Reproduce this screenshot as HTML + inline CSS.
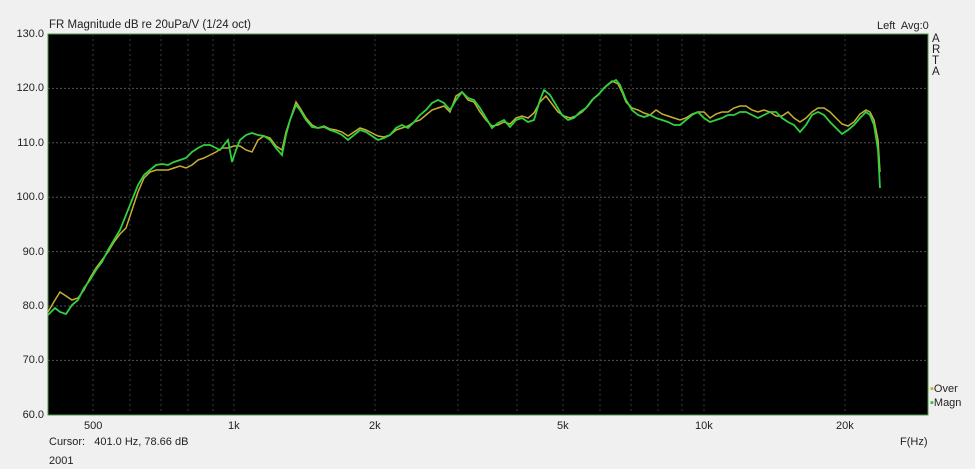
<!DOCTYPE html>
<html><head><style>
body{margin:0;width:975px;height:469px;background:#f0f0f0;font-family:"Liberation Sans",sans-serif;font-size:11px;color:#222;overflow:hidden;position:relative}
.t{position:absolute;white-space:nowrap}
.yl{position:absolute;right:931px;text-align:right}
</style></head><body>
<div class="t" style="left:49px;top:19px;font-size:11.5px">FR Magnitude dB re 20uPa/V (1/24 oct)</div>
<div class="t" style="left:877px;top:20px">Left&nbsp; Avg:0</div>
<div class="t" style="left:932px;top:34px;line-height:11px;font-size:11.5px">A<br>R<br>T<br>A</div>
<div class="yl" style="top:28px">130.0</div>
<div class="yl" style="top:82px">120.0</div>
<div class="yl" style="top:137px">110.0</div>
<div class="yl" style="top:191px">100.0</div>
<div class="yl" style="top:246px">90.0</div>
<div class="yl" style="top:300px">80.0</div>
<div class="yl" style="top:354px">70.0</div>
<div class="yl" style="top:409px">60.0</div>
<div class="t" style="left:84px;top:420px">500</div>
<div class="t" style="left:228px;top:420px">1k</div>
<div class="t" style="left:369px;top:420px">2k</div>
<div class="t" style="left:557px;top:420px">5k</div>
<div class="t" style="left:695px;top:420px">10k</div>
<div class="t" style="left:836px;top:420px">20k</div>
<div class="t" style="left:900px;top:436px">F(Hz)</div>
<div class="t" style="left:49px;top:436px">Cursor:&nbsp;&nbsp; 401.0 Hz, 78.66 dB</div>
<div class="t" style="left:49px;top:455px">2001</div>
<div class="t" style="left:930px;top:383px"><span style="color:#c8b030">▪</span>Over</div>
<div class="t" style="left:930px;top:397px"><span style="color:#30c040">▪</span>Magn</div>
<svg width="975" height="469" style="position:absolute;left:0;top:0">
<rect x="48" y="34" width="880" height="381" fill="#000" stroke="#4c9a4c" stroke-width="1"/>
<g stroke="#555" stroke-width="1" stroke-dasharray="2,2">
<line x1="48" x2="928" y1="88.4" y2="88.4"/><line x1="48" x2="928" y1="142.8" y2="142.8"/><line x1="48" x2="928" y1="197.2" y2="197.2"/><line x1="48" x2="928" y1="251.6" y2="251.6"/><line x1="48" x2="928" y1="306" y2="306"/><line x1="48" x2="928" y1="360.4" y2="360.4"/>
</g>
<g stroke="#3a3a3a" stroke-width="1" stroke-dasharray="2,3">
<line x1="93" x2="93" y1="34" y2="415"/><line x1="130" x2="130" y1="34" y2="415"/><line x1="161" x2="161" y1="34" y2="415"/><line x1="188" x2="188" y1="34" y2="415"/><line x1="213" x2="213" y1="34" y2="415"/><line x1="234" x2="234" y1="34" y2="415"/><line x1="375" x2="375" y1="34" y2="415"/><line x1="458" x2="458" y1="34" y2="415"/><line x1="517" x2="517" y1="34" y2="415"/><line x1="563" x2="563" y1="34" y2="415"/><line x1="600" x2="600" y1="34" y2="415"/><line x1="631" x2="631" y1="34" y2="415"/><line x1="658" x2="658" y1="34" y2="415"/><line x1="682" x2="682" y1="34" y2="415"/><line x1="704" x2="704" y1="34" y2="415"/><line x1="845" x2="845" y1="34" y2="415"/>
</g>
<polyline fill="none" stroke="#c8b030" stroke-width="1.5" points="48,312 55,300 60,292 66,296 72,300 78,298 84,290 90,278 96,268 102,260 108,252 114,242 120,234 126,228 132,210 138,192 144,178 150,172 156,170 162,170 168,170 174,168 180,166 186,168 192,165 198,160 204,158 210,155 216,152 222,148 228,148 234,146 240,146 246,150 252,152 258,140 264,136 270,138 276,146 282,150 286,132 290,120 296,102 300,108 306,118 312,125 318,128 324,126 330,129 336,130 342,132 348,136 354,132 360,128 366,130 372,133 378,136 384,137 390,135 396,130 402,128 408,126 414,122 420,120 426,115 432,110 438,108 444,106 450,112 456,96 462,92 468,100 474,102 480,112 486,120 492,126 498,125 504,122 510,124 516,118 522,116 528,118 534,113 540,102 546,96 552,104 558,112 564,116 570,118 576,116 582,112 588,106 594,98 600,93 606,86 612,81 618,84 622,92 626,102 632,108 638,110 644,113 650,115 656,110 662,114 668,116 674,118 680,120 686,118 692,114 698,112 704,112 710,118 716,114 722,112 728,112 734,108 740,106 746,106 752,110 758,112 764,110 770,112 776,116 782,116 788,112 794,118 800,122 806,118 812,112 818,108 824,108 830,112 836,118 842,124 848,126 854,122 860,114 866,110 870,112 874,120 878,140 880,172"/>
<polyline fill="none" stroke="#30d040" stroke-width="1.8" points="48,315 55,308 60,312 66,314 72,305 78,300 84,288 90,280 96,270 102,262 108,250 114,240 120,230 126,215 132,200 138,185 144,175 150,170 156,165 162,164 168,165 174,162 180,160 186,158 192,152 198,148 204,145 210,145 216,148 220,150 224,145 228,140 232,162 236,150 240,140 246,135 252,133 258,135 264,136 270,140 276,148 282,155 286,135 290,120 296,105 300,110 306,120 312,127 318,128 324,127 330,130 336,132 342,135 348,140 354,135 360,130 366,132 372,136 378,140 384,138 390,135 396,128 402,125 408,128 414,122 420,115 426,110 432,103 438,100 444,103 450,110 456,100 462,92 468,98 474,100 480,108 486,118 492,128 498,123 504,120 510,127 516,120 522,118 528,122 534,120 540,100 544,90 550,95 556,105 562,115 568,120 574,118 580,112 586,108 592,100 598,95 604,88 610,83 616,80 620,85 626,100 632,110 638,115 644,117 650,115 656,118 662,120 668,122 674,125 680,125 686,120 692,115 698,112 704,118 710,122 716,120 722,118 728,115 734,115 740,112 746,112 752,115 758,118 764,115 770,112 776,112 782,118 788,122 794,125 800,132 806,125 812,115 818,112 824,115 830,122 836,128 842,134 848,130 854,125 860,118 866,112 870,115 874,125 878,150 880,188"/>
</svg>
</body></html>
